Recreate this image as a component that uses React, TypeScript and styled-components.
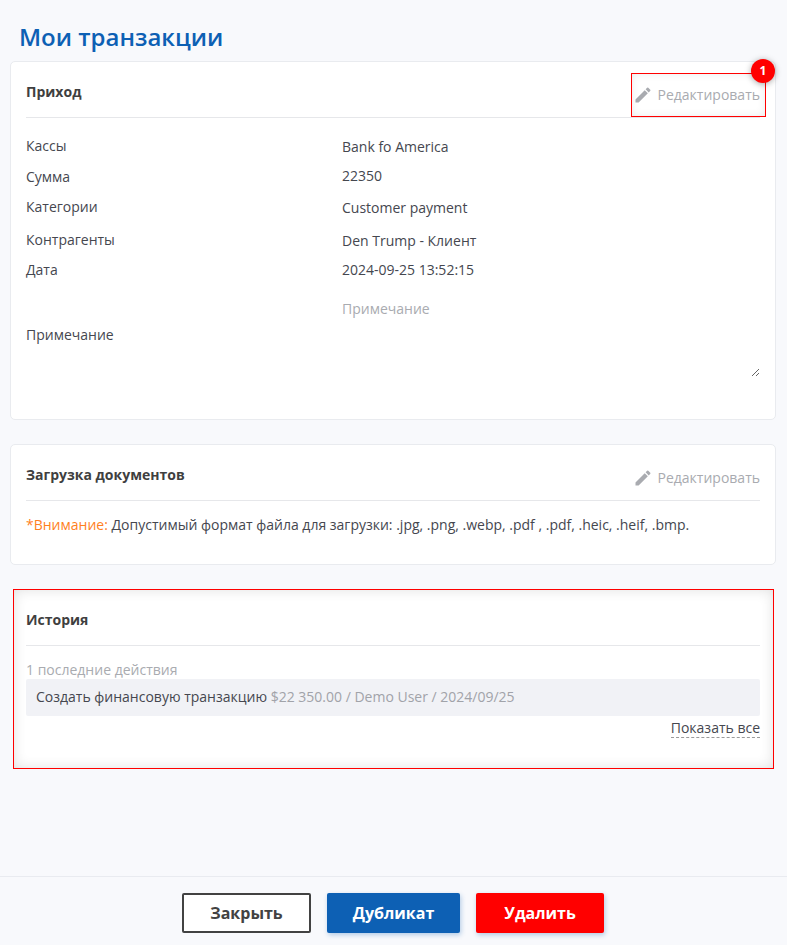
import React from 'react';
import styled, {createGlobalStyle} from 'styled-components';

const GlobalStyle = createGlobalStyle`
    html, body {
        margin: 0;
        padding: 0;
        background: #f8f9fc;
        font-family: "Open Sans", "Liberation Sans", sans-serif;
        color: #3f4254;
    }
`;

const Page = styled.div`
    width: 787px;
    height: 945px;
    display: flex;
    flex-direction: column;
    overflow: hidden;
`;

const Content = styled.main`
    flex: 1;
    padding: 20px 11px 0 10px;
    display: flex;
    flex-direction: column;
`;

const PageTitle = styled.h1`
    margin: 0 0 7px 9px;
    font-size: 24px;
    line-height: 34px;
    font-weight: 600;
    color: #0d60b4;
`;

const Card = styled.section<{$height: number}>`
    position: relative;
    box-sizing: border-box;
    height: ${p => p.$height}px;
    margin-bottom: 24px;
    padding: 0 15px;
    background: #fff;
    border: 1px solid #e9ebef;
    border-radius: 5px;
`;

const HighlightCard = styled.section`
    box-sizing: border-box;
    height: 180px;
    margin: 0 2px 0 3px;
    padding: 1px 14px 0 13px;
    background: #fff;
    outline: 1px solid #ff0000;
    outline-offset: -1px;
    box-shadow: inset 0 0 14px rgba(0, 0, 0, 0.14);
`;

const CardHeader = styled.header`
    height: 55px;
    display: flex;
    align-items: center;
    justify-content: space-between;
    border-bottom: 1px solid #e6e7ea;
`;

const CardTitle = styled.h2`
    margin: 5px 0 0;
    font-size: 14px;
    line-height: 20px;
    font-weight: 700;
    color: #3f3f3f;
`;

const EditLink = styled.a`
    display: flex;
    align-items: center;
    gap: 5px;
    font-size: 14px;
    line-height: 20px;
    color: #a9abb0;
    margin-top: 10px;
`;

const EditHighlight = styled.div`
    position: absolute;
    top: 11px;
    right: 9px;
    width: 135px;
    height: 44px;
    box-sizing: border-box;
    outline: 1px solid #ff0000;
    outline-offset: -1px;
    box-shadow: inset 0 0 10px rgba(0, 0, 0, 0.1);
    pointer-events: none;
`;

const Badge = styled.span`
    position: absolute;
    top: -14px;
    right: -9px;
    width: 24px;
    height: 24px;
    border-radius: 50%;
    background: #f00;
    color: #fff;
    font-size: 12px;
    font-weight: 700;
    line-height: 24px;
    text-align: center;
    box-shadow: 0 1px 6px rgba(0, 0, 0, 0.35);
`;

const Details = styled.div`
    padding-top: 18px;
    display: flex;
    flex-direction: column;
`;

const Row = styled.div<{$height: number}>`
    height: ${p => p.$height}px;
    display: grid;
    grid-template-columns: 316px 1fr;
    font-size: 14px;
    line-height: 20px;
    color: #45474f;
`;

const Value = styled.span<{$top: number}>`
    margin-top: ${p => p.$top}px;
`;

const NoteRow = styled.div`
    display: grid;
    grid-template-columns: 316px 1fr;
    font-size: 14px;
    line-height: 20px;
    color: #45474f;
`;

const NoteLabel = styled.span`
    padding-top: 45px;
`;

const NoteInput = styled.textarea`
    box-sizing: border-box;
    width: 100%;
    height: 97px;
    padding: 19px 0 0;
    border: 0;
    outline: 0;
    background: transparent;
    font: inherit;
    color: inherit;
    &::placeholder {
        color: #a9abb0;
        opacity: 1;
    }
`;

const Notice = styled.p`
    margin: 14px 0 0;
    font-size: 14px;
    line-height: 20px;
    color: #45474f;
`;

const Warning = styled.span`
    color: #ff7f1e;
`;

const Muted = styled.div`
    margin-top: 15px;
    font-size: 14px;
    line-height: 18px;
    color: #a9abb0;
`;

const HistoryItem = styled.div`
    height: 37px;
    padding: 0 10px;
    background: #f1f2f6;
    border-radius: 2px;
    font-size: 14px;
    line-height: 36px;
    color: #45474f;
`;

const HistoryMeta = styled.span`
    color: #a1a3a9;
`;

const ShowAllRow = styled.div`
    display: flex;
    justify-content: flex-end;
    margin-top: 2px;
`;

const ShowAll = styled.a`
    font-size: 14px;
    line-height: 19px;
    color: #45474f;
    border-bottom: 1px dashed #9a9a9a;
`;

const Footer = styled.footer`
    height: 69px;
    box-sizing: border-box;
    border-top: 1px solid #e9ebf0;
    padding: 16px 1px 0 0;
    display: flex;
    justify-content: center;
    gap: 16px;
`;

const Button = styled.button<{$kind: 'close' | 'copy' | 'remove'; $width: number}>`
    box-sizing: border-box;
    width: ${p => p.$width}px;
    height: 40px;
    border-radius: 2px;
    font-family: inherit;
    font-size: 16px;
    font-weight: 700;
    border: ${p => (p.$kind === 'close' ? '2px solid #424242' : '0')};
    color: ${p => (p.$kind === 'close' ? '#424242' : '#fff')};
    background: ${p => (p.$kind === 'close' ? '#fff' : p.$kind === 'copy' ? '#0d60b4' : '#f00')};
    box-shadow: ${p => (p.$kind === 'close' ? 'none' : '1px 2px 5px rgba(13, 96, 180, 0.3)')};
`;

const PencilIcon = () => (
    <svg width="20" height="20" viewBox="0 0 24 24" fill="#a9abb0">
        <path d="M3 17.25V21h3.75L17.81 9.94l-3.75-3.75L3 17.25zM20.71 7.04a1 1 0 0 0 0-1.41l-2.34-2.34a1 1 0 0 0-1.41 0l-1.83 1.83 3.75 3.75 1.83-1.83z"/>
    </svg>
);

const details = [
    {label: 'Кассы', value: 'Bank fo America', height: 31, top: 1},
    {label: 'Сумма', value: '22350', height: 30, top: -1},
    {label: 'Категории', value: 'Customer payment', height: 33, top: 1},
    {label: 'Контрагенты', value: 'Den Trump - Клиент', height: 30, top: 1},
    {label: 'Дата', value: '2024-09-25 13:52:15', height: 20, top: 0},
];

const App: React.FC = () => {
    return (
        <Page>
            <GlobalStyle/>
            <Content>
                <PageTitle>Мои транзакции</PageTitle>
                <Card $height={359}>
                    <CardHeader>
                        <CardTitle>Приход</CardTitle>
                        <EditLink><PencilIcon/>Редактировать</EditLink>
                    </CardHeader>
                    <EditHighlight><Badge>1</Badge></EditHighlight>
                    <Details>
                        {details.map(row => (
                            <Row key={row.label} $height={row.height}>
                                <span>{row.label}</span>
                                <Value $top={row.top}>{row.value}</Value>
                            </Row>
                        ))}
                        <NoteRow>
                            <NoteLabel>Примечание</NoteLabel>
                            <NoteInput placeholder="Примечание"/>
                        </NoteRow>
                    </Details>
                </Card>
                <Card $height={121}>
                    <CardHeader>
                        <CardTitle>Загрузка документов</CardTitle>
                        <EditLink><PencilIcon/>Редактировать</EditLink>
                    </CardHeader>
                    <Notice>
                        <Warning>*Внимание:</Warning> Допустимый формат файла для загрузки: .jpg, .png, .webp, .pdf , .pdf, .heic, .heif, .bmp.
                    </Notice>
                </Card>
                <HighlightCard>
                    <CardHeader>
                        <CardTitle>История</CardTitle>
                    </CardHeader>
                    <Muted>1 последние действия</Muted>
                    <HistoryItem>
                        Создать финансовую транзакцию <HistoryMeta>$22 350.00 / Demo User / 2024/09/25</HistoryMeta>
                    </HistoryItem>
                    <ShowAllRow><ShowAll>Показать все</ShowAll></ShowAllRow>
                </HighlightCard>
            </Content>
            <Footer>
                <Button $kind="close" $width={129}>Закрыть</Button>
                <Button $kind="copy" $width={133}>Дубликат</Button>
                <Button $kind="remove" $width={128}>Удалить</Button>
            </Footer>
        </Page>
    );
};

export default App;
